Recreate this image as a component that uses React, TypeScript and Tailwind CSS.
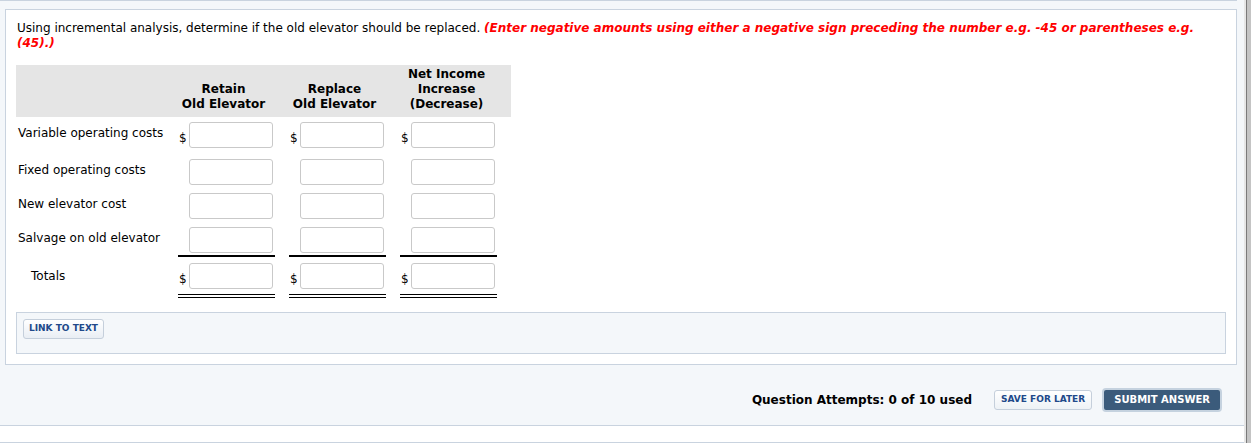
const rows = [
  { label: "Variable operating costs", dollar: true },
  { label: "Fixed operating costs", dollar: false },
  { label: "New elevator cost", dollar: false },
  { label: "Salvage on old elevator", dollar: false },
];

function Cell({ dollar }: { dollar: boolean }) {
  return (
    <div className="w-[111px] pl-[10px]">
      <div className="flex items-end w-[96px]">
        <span className="w-[11px] pb-[2px] pl-[1px] text-[12px] leading-[15px] text-black">{dollar ? "$" : ""}</span>
        <input className="w-[84px] h-[26px] border border-[#c9c9c9] rounded-[3px] bg-white outline-none" />
      </div>
    </div>
  );
}

export default function App() {
  return (
    <div className="flex w-full h-[443px] overflow-hidden font-['DejaVu_Sans',Verdana,sans-serif] text-black">
      <div className="flex-1 flex flex-col bg-[#f4f7fa]">
        <div className="h-px bg-[#c9d3df] mr-[7px]" />
        {/* question panel */}
        <div className="ml-[5px] mr-[7px] mt-[8px] bg-white border border-[#c9d3df] px-[10px] pt-[11px] pb-[10px]">
          <p className="text-[12px] leading-[15px] pl-px">
            Using incremental analysis, determine if the old elevator should be replaced.{" "}
            <span className="text-[#ff0000] font-bold italic">
              (Enter negative amounts using either a negative sign preceding the number e.g. -45 or parentheses e.g.
              <br />
              (45).)
            </span>
          </p>

          <div className="mt-[14px] w-[495px]">
            <div className="flex items-end h-[52px] bg-[#e5e5e5] pb-[5px] text-[12px] leading-[15px] font-bold text-center">
              <div className="w-[152px]" />
              <div className="w-[111px]">Retain<br />Old Elevator</div>
              <div className="w-[111px]">Replace<br />Old Elevator</div>
              <div className="w-[113px]">Net Income<br />Increase<br />(Decrease)</div>
            </div>

            {rows.map((r, i) => (
              <div key={r.label} className={`flex items-center ${i === 0 ? "mt-[5px]" : i === 1 ? "mt-[11px]" : "mt-[8px]"}`}>
                <div className="w-[152px] pl-[2px] text-[12px] leading-[15px] -mt-[3px]">{r.label}</div>
                <Cell dollar={r.dollar} />
                <Cell dollar={r.dollar} />
                <Cell dollar={r.dollar} />
              </div>
            ))}

            <div className="flex mt-[2px]">
              <div className="w-[152px]" />
              {[0, 1, 2].map((k) => (
                <div key={k} className="w-[111px] pl-[10px]">
                  <div className="w-[97px] h-[2px] bg-black" />
                </div>
              ))}
            </div>

            <div className="flex items-center mt-[6px]">
              <div className="w-[152px] pl-[15px] text-[12px] leading-[15px]">Totals</div>
              <Cell dollar />
              <Cell dollar />
              <Cell dollar />
            </div>

            <div className="flex mt-[5px]">
              <div className="w-[152px]" />
              {[0, 1, 2].map((k) => (
                <div key={k} className="w-[111px] pl-[10px]">
                  <div className="w-[97px] h-px bg-black" />
                  <div className="w-[97px] h-px bg-black mt-[2px]" />
                </div>
              ))}
            </div>
          </div>

          <div className="mt-[14px] flex items-start bg-[#f4f7fa] border border-[#c9d3df] pt-[6px] pl-[6px] pb-[14px]">
            <button className="h-[20px] px-[5px] rounded-[3px] border border-[#c5cfdb] bg-gradient-to-b from-white to-[#e9eef4] text-[9px] font-bold text-[#21498a]">
              LINK TO TEXT
            </button>
          </div>
        </div>

        {/* footer */}
        <div className="h-[60px] mr-[7px] flex items-center justify-end pt-[9px] pr-[15px]">
          <span className="text-[12px] font-bold mr-[22px]">Question Attempts: 0 of 10 used</span>
          <button className="h-[20px] px-[6px] rounded-[3px] border border-[#c5cfdb] bg-gradient-to-b from-white to-[#eef2f6] text-[9px] font-bold text-[#21498a] mr-[10px]">
            SAVE FOR LATER
          </button>
          <button className="h-[24px] px-[10px] rounded-[4px] border-2 border-[#c5d2df] bg-[#3b5b7b] text-[10px] font-bold text-white">
            SUBMIT ANSWER
          </button>
        </div>
        <div className="h-px bg-[#c9d3df]" />
        <div className="h-[16px] bg-white" />
        <div className="h-px bg-[#c9d3df]" />
        <div className="flex-1 bg-white" />
      </div>
      <div className="w-[7px] flex">
        <div className="w-[2px] bg-[#e6e6e6]" />
        <div className="w-px bg-[#7a7a7a]" />
        <div className="flex-1 bg-[#c4c4c4]" />
      </div>
    </div>
  );
}
